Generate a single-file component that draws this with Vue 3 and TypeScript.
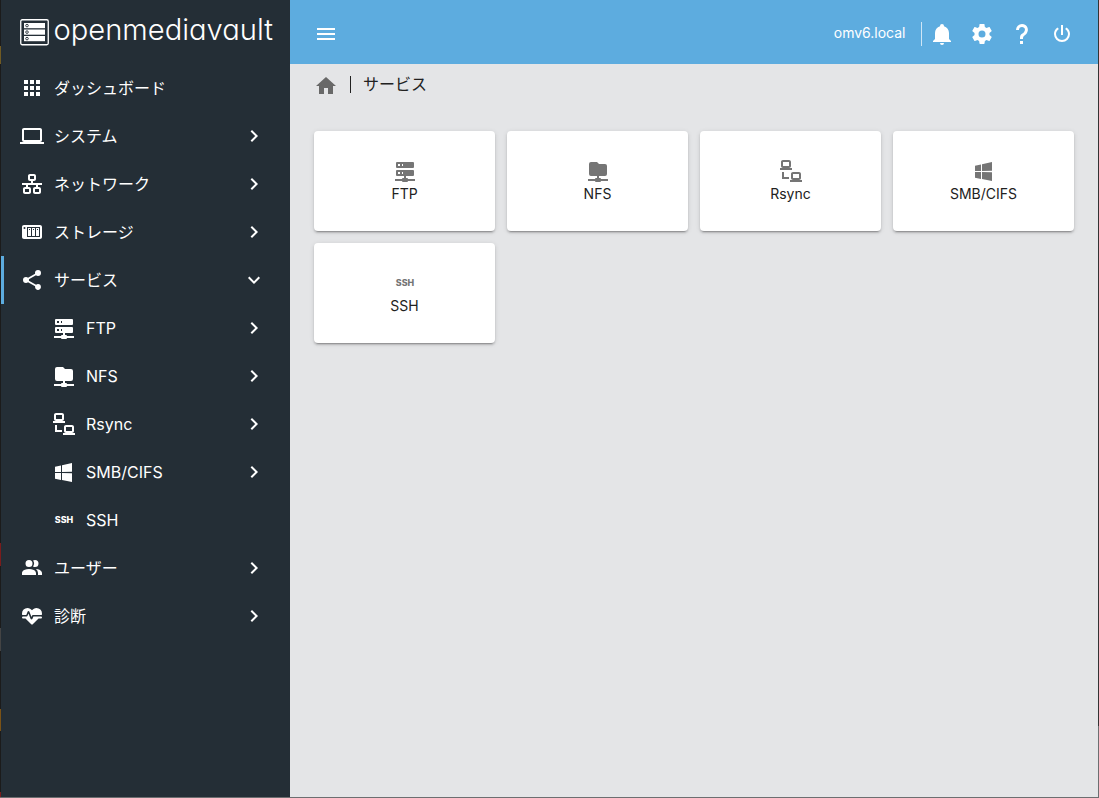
<script setup lang="ts">
interface NavItem {
  label: string
  icon: string
  arrow?: 'right' | 'down'
  child?: boolean
  active?: boolean
}

const icons: Record<string, string> = {
  apps: 'M16,20H20V16H16M16,14H20V10H16M10,8H14V4H10M16,8H20V4H16M10,14H14V10H10M4,14H8V10H4M4,20H8V16H4M10,20H14V16H10M4,8H8V4H4V8Z',
  laptop: 'M4,6H20V16H4M20,18A2,2 0 0,0 22,16V6C22,4.89 21.1,4 20,4H4C2.89,4 2,4.89 2,6V16A2,2 0 0,0 4,18H0V20H24V18H20Z',
  lan: 'M10,2C8.89,2 8,2.89 8,4V7C8,8.11 8.89,9 10,9H11V11H2V13H6V15H5C3.89,15 3,15.89 3,17V20C3,21.11 3.89,22 5,22H9C10.11,22 11,21.11 11,20V17C11,15.89 10.11,15 9,15H8V13H16V15H15C13.89,15 13,15.89 13,17V20C13,21.11 13.89,22 15,22H19C20.11,22 21,21.11 21,20V17C21,15.89 20.11,15 19,15H18V13H22V11H13V9H14C15.11,9 16,8.11 16,7V4C16,2.89 15.11,2 14,2H10M10,4H14V7H10V4M5,17H9V20H5V17M15,17H19V20H15V17Z',
  nas: 'M4,5C2.89,5 2,5.89 2,7V17C2,18.11 2.89,19 4,19H20C21.11,19 22,18.11 22,17V7C22,5.89 21.11,5 20,5H4M4.5,7A1,1 0 0,1 5.5,8A1,1 0 0,1 4.5,9A1,1 0 0,1 3.5,8A1,1 0 0,1 4.5,7M7,7H20V17H7V7M8,8V16H11V8H8M12,8V16H15V8H12M16,8V16H19V8H16M9,9H10V10H9V9M13,9H14V10H13V9M17,9H18V10H17V9Z',
  share: 'M18,16.08C17.24,16.08 16.56,16.38 16.04,16.85L8.91,12.7C8.96,12.47 9,12.24 9,12C9,11.76 8.96,11.53 8.91,11.3L15.96,7.19C16.5,7.69 17.21,8 18,8A3,3 0 0,0 21,5A3,3 0 0,0 18,2A3,3 0 0,0 15,5C15,5.24 15.04,5.47 15.09,5.7L8.04,9.81C7.5,9.31 6.79,9 6,9A3,3 0 0,0 3,12A3,3 0 0,0 6,15C6.79,15 7.5,14.69 8.04,14.19L15.16,18.34C15.11,18.55 15.08,18.77 15.08,19C15.08,20.61 16.39,21.91 18,21.91C19.61,21.91 20.92,20.61 20.92,19A2.92,2.92 0 0,0 18,16.08Z',
  server: 'M13,19H14A1,1 0 0,1 15,20H22V22H15A1,1 0 0,1 14,23H10A1,1 0 0,1 9,22H2V20H9A1,1 0 0,1 10,19H11V17H4A1,1 0 0,1 3,16V12A1,1 0 0,1 4,11H20A1,1 0 0,1 21,12V16A1,1 0 0,1 20,17H13V19M4,3H20A1,1 0 0,1 21,4V8A1,1 0 0,1 20,9H4A1,1 0 0,1 3,8V4A1,1 0 0,1 4,3M9,7H10V5H9V7M9,15H10V13H9V15M5,5V7H7V5H5M5,13V15H7V13H5Z',
  folder: 'M3,15V5A2,2 0 0,1 5,3H11L13,5H19A2,2 0 0,1 21,7V15A2,2 0 0,1 19,17H13V19H14A1,1 0 0,1 15,20H22V22H15A1,1 0 0,1 14,23H10A1,1 0 0,1 9,22H2V20H9A1,1 0 0,1 10,19H11V17H5A2,2 0 0,1 3,15Z',
  connect: 'M4,1C2.89,1 2,1.89 2,3V7C2,8.11 2.89,9 4,9H1V11H13V9H10C11.11,9 12,8.11 12,7V3C12,1.89 11.11,1 10,1H4M4,3H10V7H4V3M3,13V18L3,20H10V18H5V13H3M14,13C12.89,13 12,13.89 12,15V19C12,20.11 12.89,21 14,21H11V23H23V21H20C21.11,21 22,20.11 22,19V15C22,13.89 21.11,13 20,13H14M14,15H20V19H14V15Z',
  windows: 'M3,12V6.75L9,5.43V11.91L3,12M20,3V11.75L10,11.9V5.21L20,3M3,13L9,13.09V19.9L3,18.75V13M20,13.25V22L10,20.09V13.1L20,13.25Z',
  users: 'M16 17V19H2V17S2 13 9 13 16 17 16 17M12.5 7.5A3.5 3.5 0 1 0 9 11A3.5 3.5 0 0 0 12.5 7.5M15.94 13A5.32 5.32 0 0 1 18 17V19H22V17S22 13.37 15.94 13M15 4A3.39 3.39 0 0 0 13.07 4.59A5 5 0 0 1 13.07 10.41A3.39 3.39 0 0 0 15 11A3.5 3.5 0 0 0 15 4Z',
  heart: 'M7.5,4A5.5,5.5 0 0,0 2,9.5C2,10 2.09,10.5 2.22,11H6.3L7.57,7.63C7.87,6.83 9.05,6.75 9.43,7.63L11.5,13L12.09,11.58C12.22,11.25 12.57,11 13,11H21.78C21.91,10.5 22,10 22,9.5A5.5,5.5 0 0,0 16.5,4C14.64,4 13,4.93 12,6.34C11,4.93 9.36,4 7.5,4V4M3,12.5A1,1 0 0,0 2,13.5A1,1 0 0,0 3,14.5H5.44L11,20C12,20.9 12,20.9 13,20L18.56,14.5H21A1,1 0 0,0 22,13.5A1,1 0 0,0 21,12.5H13.4L12.47,14.8C12.07,15.81 10.92,15.67 10.55,14.83L8.5,9.5L7.54,11.83C7.39,12.21 7.05,12.5 6.6,12.5H3Z',
  right: 'M8.59,16.58L13.17,12L8.59,7.41L10,6L16,12L10,18L8.59,16.58Z',
  down: 'M7.41,8.58L12,13.17L16.59,8.58L18,10L12,16L6,10L7.41,8.58Z',
  menu: 'M3,6H21V8H3V6M3,11H21V13H3V11M3,16H21V18H3V16Z',
  home: 'M10,20V14H14V20H19V12H22L12,3L2,12H5V20H10Z',
  bell: 'M21,19V20H3V19L5,17V11C5,7.9 7.03,5.17 10,4.29C10,4.19 10,4.1 10,4A2,2 0 0,1 12,2A2,2 0 0,1 14,4C14,4.1 14,4.19 14,4.29C16.97,5.17 19,7.9 19,11V17L21,19M14,21A2,2 0 0,1 12,23A2,2 0 0,1 10,21',
  cog: 'M12,15.5A3.5,3.5 0 0,1 8.5,12A3.5,3.5 0 0,1 12,8.5A3.5,3.5 0 0,1 15.5,12A3.5,3.5 0 0,1 12,15.5M19.43,12.97C19.47,12.65 19.5,12.33 19.5,12C19.5,11.67 19.47,11.34 19.43,11L21.54,9.37C21.73,9.22 21.78,8.95 21.66,8.73L19.66,5.27C19.54,5.05 19.27,4.96 19.05,5.05L16.56,6.05C16.04,5.66 15.5,5.32 14.87,5.07L14.5,2.42C14.46,2.18 14.25,2 14,2H10C9.75,2 9.54,2.18 9.5,2.42L9.13,5.07C8.5,5.32 7.96,5.66 7.44,6.05L4.95,5.05C4.73,4.96 4.46,5.05 4.34,5.27L2.34,8.73C2.21,8.95 2.27,9.22 2.46,9.37L4.57,11C4.53,11.34 4.5,11.67 4.5,12C4.5,12.33 4.53,12.65 4.57,12.97L2.46,14.63C2.27,14.78 2.21,15.05 2.34,15.27L4.34,18.73C4.46,18.95 4.73,19.03 4.95,18.95L7.44,17.94C7.96,18.34 8.5,18.68 9.13,18.93L9.5,21.58C9.54,21.82 9.75,22 10,22H14C14.25,22 14.46,21.82 14.5,21.58L14.87,18.93C15.5,18.67 16.04,18.34 16.56,17.94L19.05,18.95C19.27,19.03 19.54,18.95 19.66,18.73L21.66,15.27C21.78,15.05 21.73,14.78 21.54,14.63L19.43,12.97Z',
  help: 'M10,19H13V22H10V19M12,2C17.35,2.22 19.68,7.62 16.5,11.67C15.67,12.67 14.33,13.33 13.67,14.17C13,15 13,16 13,17H10C10,15.33 10,13.92 10.67,12.92C11.33,11.92 12.67,11.33 13.5,10.67C15.92,8.43 15.32,5.26 12,5A3,3 0 0,0 9,8H6A6,6 0 0,1 12,2Z',
  power: 'M16.56,5.44L15.11,6.89C16.84,7.94 18,9.83 18,12A6,6 0 0,1 12,18A6,6 0 0,1 6,12C6,9.83 7.16,7.94 8.88,6.88L7.44,5.44C5.36,6.88 4,9.28 4,12A8,8 0 0,0 12,20A8,8 0 0,0 20,12C20,9.28 18.64,6.88 16.56,5.44M13,3H11V13H13'
}

const nav: NavItem[] = [
  { label: 'ダッシュボード', icon: 'apps' },
  { label: 'システム', icon: 'laptop', arrow: 'right' },
  { label: 'ネットワーク', icon: 'lan', arrow: 'right' },
  { label: 'ストレージ', icon: 'nas', arrow: 'right' },
  { label: 'サービス', icon: 'share', arrow: 'down', active: true },
  { label: 'FTP', icon: 'server', arrow: 'right', child: true },
  { label: 'NFS', icon: 'folder', arrow: 'right', child: true },
  { label: 'Rsync', icon: 'connect', arrow: 'right', child: true },
  { label: 'SMB/CIFS', icon: 'windows', arrow: 'right', child: true },
  { label: 'SSH', icon: 'ssh', child: true },
  { label: 'ユーザー', icon: 'users', arrow: 'right' },
  { label: '診断', icon: 'heart', arrow: 'right' }
]

const cards = nav.filter((item) => item.child)
const actions = ['bell', 'cog', 'help', 'power']
</script>

<template>
  <div class="window">
    <div class="edge-left"></div>
    <aside class="sidebar">
      <div class="brand">
        <svg class="brand-mark" viewBox="0 0 29 27">
          <rect x="0.75" y="0.75" width="27.5" height="25" rx="1.5" fill="none" stroke="#fff" stroke-width="1.3" />
          <g v-for="row in 3" :key="row">
            <rect x="4" :y="row * 6.5 - 2.5" width="21" height="5.2" fill="#fff" />
            <circle cx="7" :cy="row * 6.5 + 0.1" r="1.3" fill="#fff" stroke="#242e36" stroke-width="0.9" />
          </g>
        </svg>
        <svg class="brand-name" viewBox="0 0 222 40">
          <text x="-0.5" y="27" textLength="219.5" lengthAdjust="spacingAndGlyphs">openmediavault</text>
        </svg>
      </div>
      <nav>
        <div v-for="item in nav" :key="item.label" class="nav-item" :class="{ child: item.child, active: item.active }">
          <svg class="icon" viewBox="0 0 24 24">
            <text v-if="item.icon === 'ssh'" class="ssh" x="2.8" y="15" textLength="18.4" lengthAdjust="spacingAndGlyphs">SSH</text>
            <path v-else :d="icons[item.icon]" />
          </svg>
          <span class="label">{{ item.label }}</span>
          <svg v-if="item.arrow" class="icon" viewBox="0 0 24 24"><path :d="icons[item.arrow]" /></svg>
        </div>
      </nav>
    </aside>
    <div class="page">
      <header>
        <svg class="icon" viewBox="0 0 24 24"><path :d="icons.menu" /></svg>
        <span class="host">omv6.local</span>
        <div class="actions">
          <svg v-for="name in actions" :key="name" class="icon" viewBox="0 0 24 24"><path :d="icons[name]" /></svg>
        </div>
      </header>
      <div class="crumbs">
        <svg class="icon" viewBox="0 0 24 24"><path :d="icons.home" /></svg>
        <i class="bar"></i>
        <span class="crumb">サービス</span>
      </div>
      <main>
        <div v-for="card in cards" :key="card.label" class="card">
          <svg class="icon" viewBox="0 0 24 24">
            <text v-if="card.icon === 'ssh'" class="ssh" x="2.8" y="15" textLength="18.4" lengthAdjust="spacingAndGlyphs">SSH</text>
            <path v-else :d="icons[card.icon]" />
          </svg>
          <span>{{ card.label }}</span>
        </div>
      </main>
    </div>
    <div class="edge-right"></div>
  </div>
</template>

<style>
body {
  margin: 0;
  overflow: hidden;
}
</style>

<style scoped>
.window {
  display: flex;
  box-sizing: border-box;
  width: 1099px;
  height: 798px;
  border-bottom: 1px solid #6c6e70;
  background: #e4e5e7;
  font-family: Inter, "Noto Sans CJK JP", sans-serif;
  font-size: 16px;
}
.edge-left {
  width: 1px;
  background: linear-gradient(#1b1b1b 46px, #705a22 46px 64px, #1b1b1b 64px 543px, #7a1c1c 543px 566px, #1b1b1b 566px 628px, #444 628px 651px, #1b1b1b 651px 709px, #7a5216 709px 731px, #1b1b1b 731px 792px, #7a1c1c 792px);
}
.edge-right {
  width: 1px;
  background: linear-gradient(#333 726px, #6c6e70 726px);
}
.sidebar {
  width: 289px;
  background: #242e36;
  color: #fff;
}
.icon {
  display: block;
  flex: none;
  width: 24px;
  height: 24px;
  fill: currentColor;
}
.ssh {
  font: 800 8.4px Inter, sans-serif;
}
.brand {
  display: flex;
  height: 64px;
  padding-left: 19px;
}
.brand-mark {
  width: 29px;
  height: 27px;
  margin-top: 19px;
}
.brand-name {
  width: 222px;
  height: 40px;
  margin: 13px 0 0 5px;
  overflow: visible;
  fill: #fff;
}
.brand-name text {
  font-family: Inter, sans-serif;
  font-size: 29.5px;
  font-weight: 300;
  font-feature-settings: "cv11";
}
.nav-item {
  display: flex;
  align-items: center;
  box-sizing: border-box;
  height: 48px;
  padding: 0 24px 0 16px;
  border-left: 3px solid transparent;
}
.nav-item.active {
  border-left-color: #5dacdf;
}
.nav-item.child {
  padding-left: 48px;
}
.label {
  flex: 1;
  margin-left: 10px;
  line-height: 24px;
}
.page {
  flex: 1;
}
header {
  display: flex;
  align-items: center;
  box-sizing: border-box;
  height: 64px;
  padding: 4px 24px 0;
  background: #5dacdf;
  color: #fff;
}
.host {
  margin-left: auto;
  margin-right: 15.5px;
  padding-bottom: 3px;
  font-size: 14px;
}
.actions {
  display: flex;
  gap: 16px;
  padding-left: 8px;
  border-left: 1px solid #cfe6f6;
}
.crumbs {
  display: flex;
  align-items: center;
  height: 43px;
  padding-left: 24px;
  color: #212121;
}
.crumbs .icon {
  color: #686868;
}
.bar {
  width: 1px;
  height: 17px;
  margin: 0 12px 2px;
  background: #212121;
}
.crumb {
  padding-bottom: 5px;
}
main {
  display: grid;
  grid-template-columns: repeat(4, 181px);
  grid-auto-rows: 100px;
  gap: 12px;
  padding: 24px;
}
.card {
  display: flex;
  flex-direction: column;
  align-items: center;
  box-sizing: border-box;
  padding-top: 28px;
  border-radius: 4px;
  background: #fff;
  color: #212121;
  font-size: 14px;
  line-height: 22px;
  box-shadow: 0 3px 1px -2px rgba(0, 0, 0, 0.2), 0 2px 2px rgba(0, 0, 0, 0.14), 0 1px 5px rgba(0, 0, 0, 0.12);
}
.card .icon {
  color: #757575;
}
</style>
